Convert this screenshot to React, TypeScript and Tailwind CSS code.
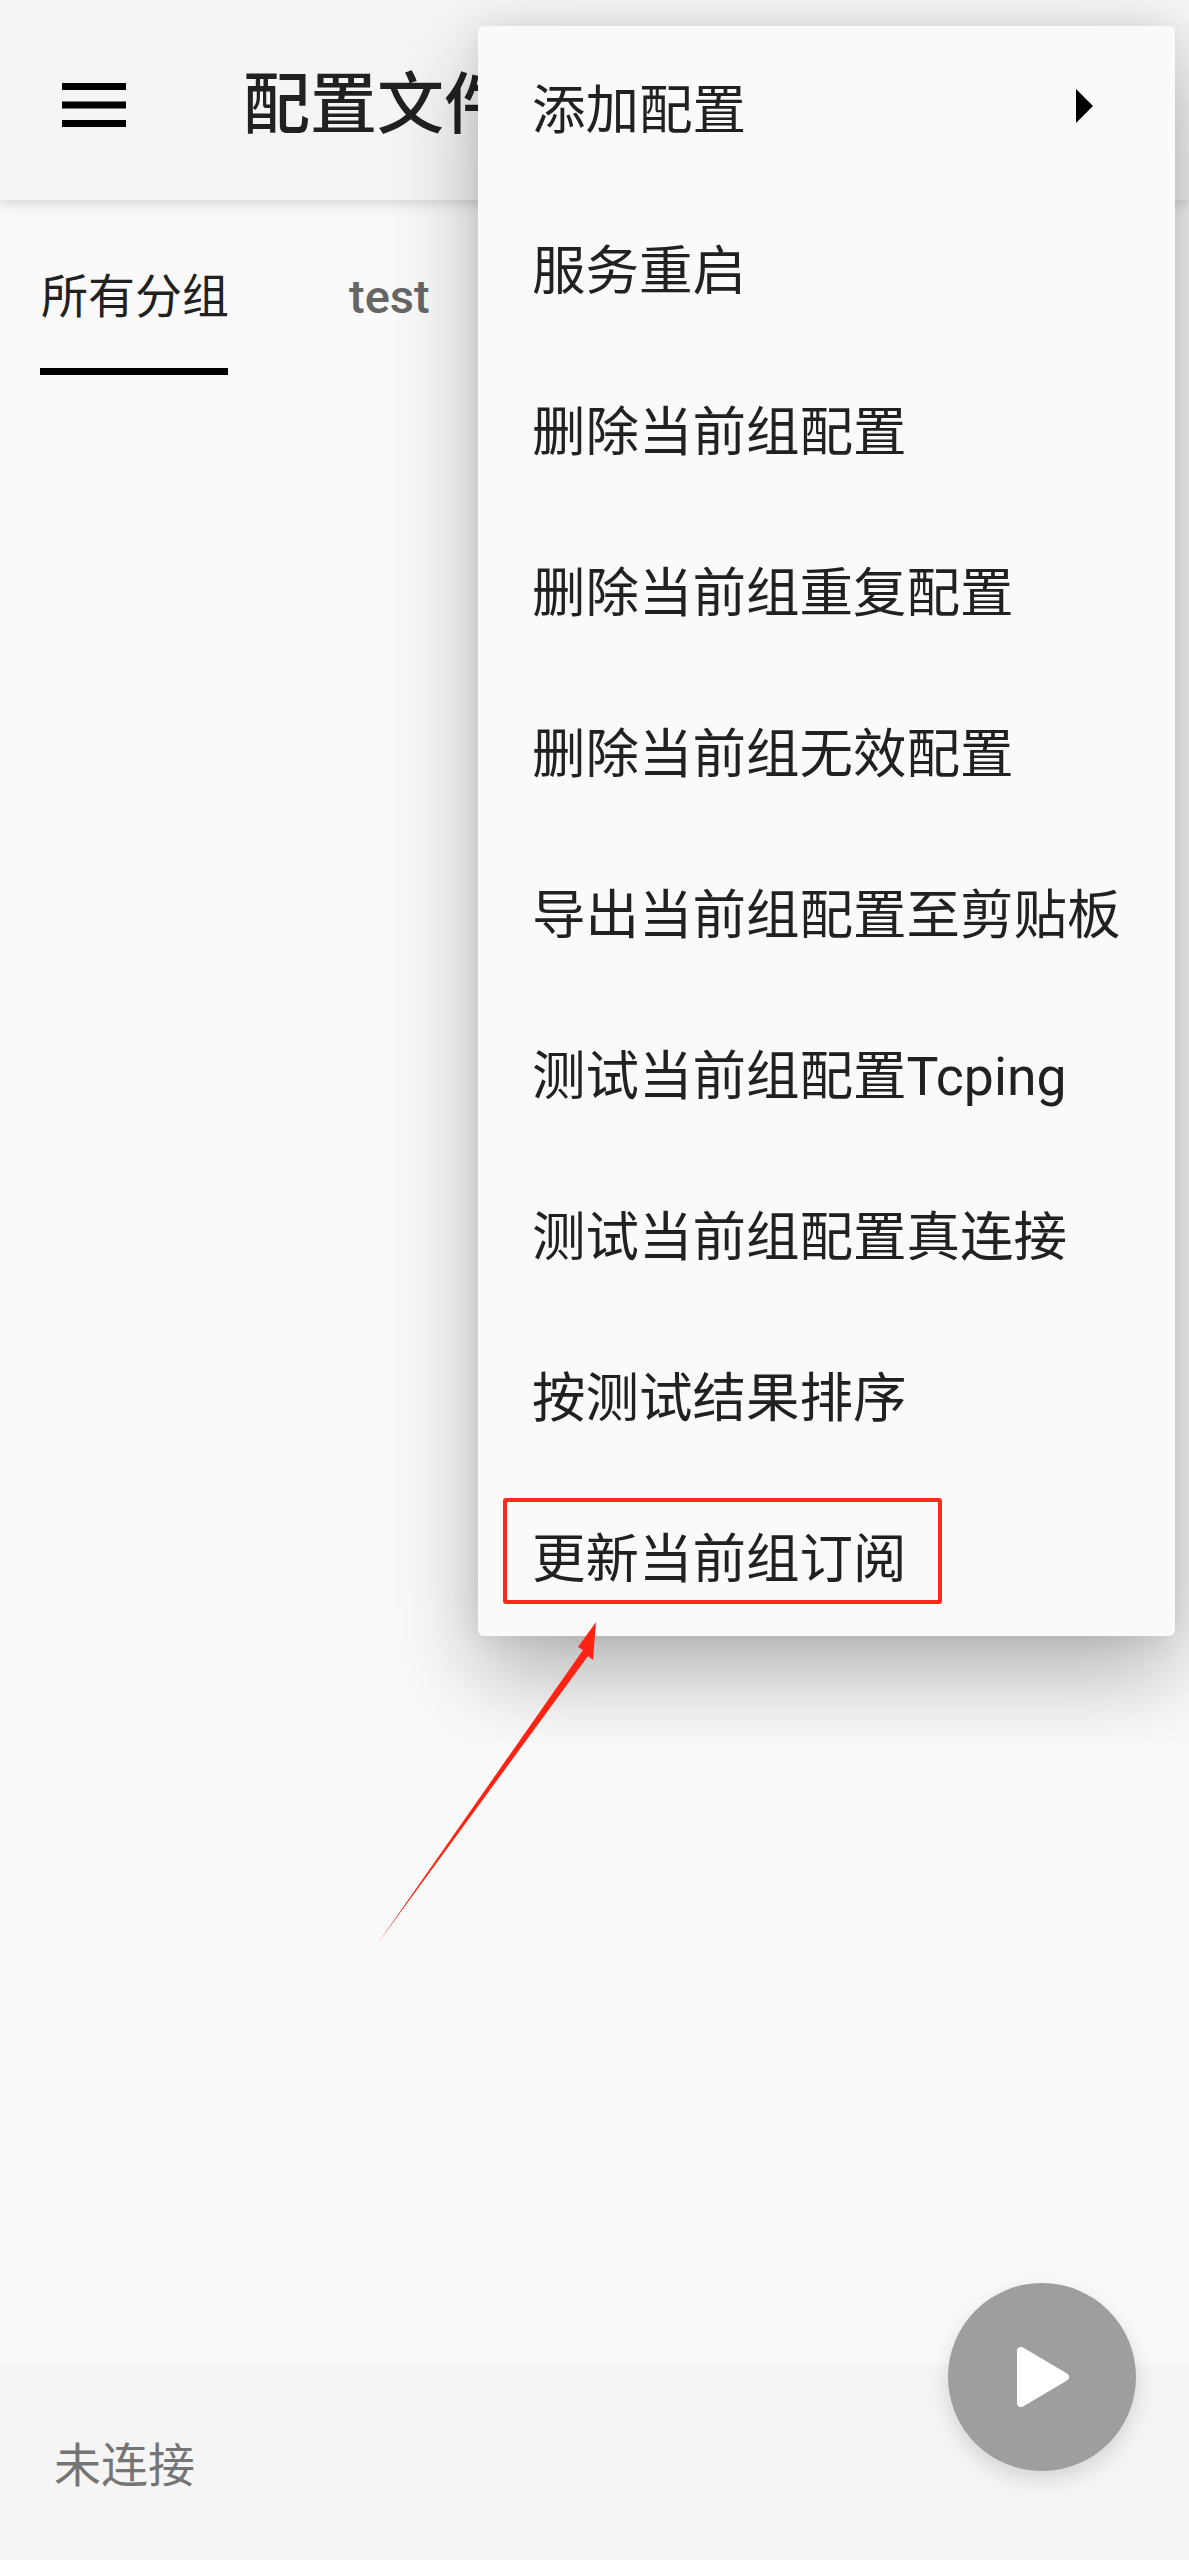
const cjk = "font-['Roboto','Noto_Sans_CJK_SC',sans-serif]"

const menuItems = [
  '添加配置',
  '服务重启',
  '删除当前组配置',
  '删除当前组重复配置',
  '删除当前组无效配置',
  '导出当前组配置至剪贴板',
  '测试当前组配置Tcping',
  '测试当前组配置真连接',
  '按测试结果排序',
  '更新当前组订阅',
]

function Menu() {
  return (
    <div className="absolute left-[386px] top-0 z-20 h-[1743px] w-[803px] overflow-hidden">
      <div className="ml-[92px] mt-[26px] flex w-[697px] flex-col rounded-[6px] bg-[#fafafa] shadow-[0_38px_90px_rgba(0,0,0,0.29),0_0_30px_rgba(0,0,0,0.08)]">
        {menuItems.map((label, i) => (
          <div key={label} className="relative flex h-[161px] items-center pl-[54px] text-[53.500px] leading-none text-[#212121]">
            <span className="mt-[8px]">{label}</span>
            {i === 0 && (
              <svg className="absolute left-[598px] top-[63px]" width="18" height="34" viewBox="0 0 18 34">
                <path d="M0 0 L17 17 L0 34 Z" fill="#000" />
              </svg>
            )}
          </div>
        ))}
      </div>
    </div>
  )
}

export default function App() {
  return (
    <div className={`relative flex h-[2560px] w-[1189px] flex-col overflow-hidden bg-[#fafafa] ${cjk}`}>
      {/* APP BAR */}
      <div className="relative z-10 flex h-[200px] shrink-0 items-center bg-[#f5f5f5] pl-[62px] pt-[10px] shadow-[0_3px_14px_rgba(0,0,0,0.16)]">
        <svg width="64" height="44" viewBox="0 0 64 44" className="shrink-0">
          <path d="M0 0h64v7H0zM0 18.500h64v7H0zM0 37h64v7H0z" fill="#000" />
        </svg>
        <span className="ml-[117px] text-[67px] font-medium leading-none whitespace-nowrap text-[#212121]">配置文件</span>
      </div>

      {/* TABS */}
      <div className="flex h-[175px] shrink-0 items-start pl-[40px]">
        <div className="flex h-[175px] w-[188px] items-start border-b-[7px] border-black pl-[1px] pt-[70px]">
          <span className="text-[47px] leading-[54px] whitespace-nowrap text-[#212121]">所有分组</span>
        </div>
        <div className="ml-[121px] pt-[70px] text-[47px] font-medium leading-[54px] text-[#666666]">test</div>
      </div>

      <div className="flex-1" />

      {/* STATUS BAR */}
      <div className="flex h-[195px] shrink-0 items-center bg-[#f5f5f5] pl-[54px] text-[47px] text-[#757575]">
        <span className="mt-[8px]">未连接</span>
      </div>

      {/* FAB */}
      <div className="absolute left-[948px] top-[2283px] flex h-[188px] w-[188px] items-center justify-center rounded-full bg-[#9e9e9e] shadow-[0_8px_22px_rgba(0,0,0,0.14)]">
        <svg width="54" height="60" viewBox="0 0 54 60" className="mt-[-1px] ml-[1px]">
          <path d="M5 4 L49 30 L5 56 Z" fill="#fff" stroke="#fff" strokeWidth="8" strokeLinejoin="round" />
        </svg>
      </div>

      {/* status bar icon fragment at the very top */}
      <div className="absolute left-[1006px] top-[-7px] h-[10px] w-[16px] rounded-full bg-[#222222]" />

      <Menu />

      {/* ANNOTATION */}
      <div className="absolute left-[503px] top-[1498px] z-30 h-[106px] w-[439px] rounded-[3px] border-[4px] border-[#ff2a1a]" />
      <svg className="absolute left-0 top-0 z-30" width="1189" height="2560" viewBox="0 0 1189 2560">
        <path d="M378 1943 L583 1650 L578 1647 L596 1622 L593 1660 L588 1656 Z" fill="#ff2314" />
      </svg>
    </div>
  )
}
